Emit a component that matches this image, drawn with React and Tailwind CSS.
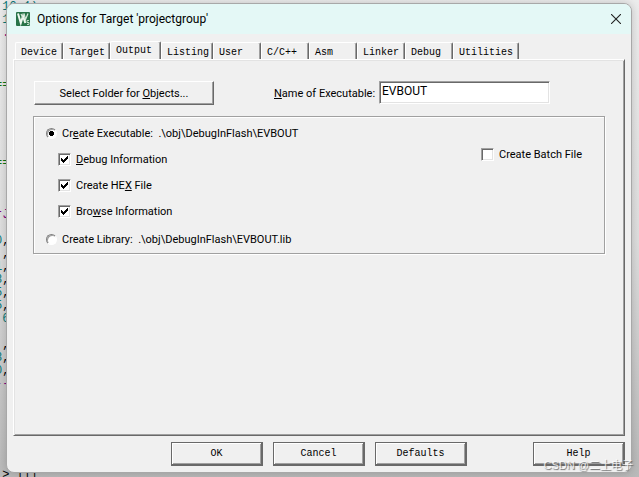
import React from "react";

const TABS = [
  { name: "Device", width: "w-[48px]" },
  { name: "Target", width: "w-[47px]" },
  { name: "Output", width: "w-[51px]" },
  { name: "Listing", width: "w-[52px]" },
  { name: "User", width: "w-[48px]" },
  { name: "C/C++", width: "w-[48px]" },
  { name: "Asm", width: "w-[48px]" },
  { name: "Linker", width: "w-[48px]" },
  { name: "Debug", width: "w-[48px]" },
  { name: "Utilities", width: "w-[66px]" },
];

const TEAL = "text-[#087878]";
const PURPLE = "text-[#800080]";
const GREEN = "text-[#107010]";

const CODE = [
  [" 10 1)", TEAL], [" 1(", TEAL], [" .", PURPLE], [], [], [],
  ["==", GREEN], [], [], [], [], [], ["==", GREEN], [], [], [],
  ["rJ", PURPLE], [], ["0", TEAL, ","], [" ", TEAL, ","], ["1", TEAL, ","],
  ["8", TEAL, ","], ["5", TEAL, ","], ["5", TEAL, ","], [" 6", TEAL], [],
  ["'", TEAL, ","], ["8", TEAL, ","], ["0", TEAL, ","], ["--", PURPLE],
  [], [], [], [], [], [], [" >", "text-black", " |||"],
];

function Editor() {
  return (
    <div aria-hidden="true" className="absolute inset-0 overflow-hidden bg-linear-to-b from-[#ececec] via-[#dedede] to-[#b9b9b9] pt-px font-['Liberation_Mono',monospace] text-[12px] leading-[13px]">
      {CODE.map(([text, color, rest], i) => (
        <div key={i} className="-ml-[5px] h-[13px] whitespace-pre">
          <span className={color}>{text}</span>
          <span>{rest}</span>
        </div>
      ))}
    </div>
  );
}

function TickBox({ checked, children }) {
  return (
    <label className="flex h-[26px] items-center gap-[5px]">
      <span className="grid">
        <input
          type="checkbox"
          defaultChecked={checked}
          className="peer col-start-1 row-start-1 size-[13px] appearance-none border border-t-[#a0a0a0] border-l-[#a0a0a0] border-r-white border-b-white bg-white shadow-[inset_1px_1px_#696969,inset_-1px_-1px_#e3e3e3]"
        />
        <svg viewBox="0 0 13 13" className="pointer-events-none invisible col-start-1 row-start-1 size-[13px] peer-checked:visible" shapeRendering="crispEdges">
          <path d="M3 5h1v1h1v1h1v-1h1v-1h1v-1h1v-1h1v3h-1v1h-1v1h-1v1h-1v1h-1v-1h-1v-1h-1z" />
        </svg>
      </span>
      <span className="pt-[2px]">{children}</span>
    </label>
  );
}

function Radio({ checked, children }) {
  return (
    <label className="flex h-[26px] items-center gap-[5px]">
      <span className="grid">
        <input type="radio" name="kind" defaultChecked={checked} className="peer col-start-1 row-start-1 size-[11px] appearance-none rounded-full border border-t-[#808080] border-l-[#808080] border-r-white border-b-white bg-white shadow-[inset_1px_1px_#a0a0a0]" />
        <svg viewBox="0 0 11 11" className="pointer-events-none invisible col-start-1 row-start-1 size-[11px] peer-checked:visible" shapeRendering="crispEdges">
          <path d="M4 3h3v1h1v3h-1v1h-3v-1h-1v-3h1z" />
        </svg>
      </span>
      <span className="pt-[2px] whitespace-pre">{children}</span>
    </label>
  );
}

function DialogButton({ children }) {
  return (
    <button className="h-[24px] w-[92px] border-t border-r-2 border-b-2 border-l border-[#696969] bg-[#f0f0f0] font-['Liberation_Mono',monospace] text-[10px] font-medium shadow-[inset_1px_1px_white,inset_-1px_-1px_#a0a0a0]">
      {children}
    </button>
  );
}

export default function App() {
  return (
    <div className="relative flex h-screen flex-col pt-[3px] pr-[7px] pb-1 pl-[6px] text-black">
      <Editor />
      <main className="relative flex flex-1 flex-col overflow-hidden rounded-lg border border-[#a8a8a8] bg-[#f0f0f0] font-['Roboto','Liberation_Sans',sans-serif] text-[11px] leading-[16px] shadow-[0_0_8px_#00000030]">
        <header className="flex h-[30px] shrink-0 items-center bg-[#e4f8f6] pr-[10px] pl-[9px]">
          <svg viewBox="0 0 14 14" className="size-[14px]">
            <rect width="14" height="14" rx="1" fill="#287348" />
            <path d="M2 1.500l2.800 9.500L7 4l2.300 7" fill="none" stroke="#eef8f0" strokeWidth="2" />
            <path d="M5 2l2 4M8 1.500l1.500 6L12 1.500" fill="none" stroke="#d3e6d8" strokeWidth="1.300" />
            <path d="M13 8.500h-2v2h2v2h-2" fill="none" stroke="#dff0e2" strokeWidth=".8" />
          </svg>
          <h1 className="ml-[7px] flex-1 font-['Roboto',sans-serif] text-[12px]">Options for Target 'projectgroup'</h1>
          <button aria-label="Close">
            <svg viewBox="0 0 10 10" className="size-[10px]" fill="none" stroke="#222" strokeWidth="1.100">
              <path d="M0 0l10 10M10 0L0 10" />
            </svg>
          </button>
        </header>

        <div role="tablist" className="mt-[7px] flex h-[18px] shrink-0 items-end pl-2 font-['Liberation_Mono',monospace] text-[10px]">
          {TABS.map(({ name, width }) =>
            name === "Output" ? (
              <button key={name} role="tab" aria-selected="true" className={`${width} h-[18px] rounded-t-xs border-t border-r border-l border-white border-r-[#696969] bg-[#f0f0f0] pl-[5px] text-left shadow-[inset_-1px_0_#a0a0a0]`}>{name}</button>
            ) : (
              <button key={name} role="tab" aria-selected="false" className={`${width} h-[17px] rounded-t-xs border-t border-r border-l border-white border-r-[#696969] pt-[2px] pl-[5px] text-left shadow-[inset_-1px_0_#a0a0a0]`}>{name}</button>
            )
          )}
        </div>

        <section className="mr-[6px] ml-[6px] flex-1 border border-white border-r-[#696969] border-b-[#696969] pt-[21px] pr-[19px] pl-[19px] shadow-[inset_1px_1px_#e3e3e3,inset_-1px_-1px_#a0a0a0]">
          <div className="flex items-start pl-px">
            <button className="h-[24px] w-[180px] border border-white border-r-[#696969] border-b-[#696969] pt-px shadow-[inset_-1px_-1px_#a0a0a0]">
              Select Folder for <u>O</u>bjects...
            </button>
            <label htmlFor="exe" className="ml-[60px] w-[105px] pt-[5px] whitespace-nowrap"><u>N</u>ame of Executable:</label>
            <input id="exe" defaultValue="EVBOUT" className="h-[23px] w-[171px] border border-t-[#a0a0a0] border-l-[#a0a0a0] border-r-white border-b-white bg-white px-[2px] pb-[3px] text-[12px] shadow-[inset_1px_1px_#696969,inset_-1px_-1px_#e3e3e3] outline-none" />
          </div>

          <div className="mt-[11px] flex h-[138px] justify-between border border-[#a0a0a0] pt-[3px] pr-[22px] pl-3 shadow-[inset_1px_1px_white,1px_1px_white]">
            <div>
              <Radio checked>Cr<u>e</u>ate Executable:  .\obj\DebugInFlash\EVBOUT</Radio>
              <div className="pb-[2px] pl-3">
                <TickBox checked><u>D</u>ebug Information</TickBox>
                <TickBox checked>Create HE<u>X</u> File</TickBox>
                <TickBox checked>Bro<u>w</u>se Information</TickBox>
              </div>
              <Radio>Create Library:  .\obj\DebugInFlash\EVBOUT.lib</Radio>
            </div>
            <div className="pt-[21px]">
              <TickBox>Create Batch File</TickBox>
            </div>
          </div>
        </section>

        <footer className="flex shrink-0 justify-between pt-[6px] pr-[6px] pb-[6px] pl-[164px]">
          <div className="flex gap-[10px]">
            <DialogButton>OK</DialogButton>
            <DialogButton>Cancel</DialogButton>
            <DialogButton>Defaults</DialogButton>
          </div>
          <DialogButton>Help</DialogButton>
        </footer>
      </main>
      <div className="absolute right-[6px] bottom-1 font-['Liberation_Sans','Noto_Sans_CJK_SC',sans-serif] text-[11px] leading-[16px] text-white/80 [text-shadow:1px_1px_1px_#666]">CSDN @二土电子</div>
    </div>
  );
}
